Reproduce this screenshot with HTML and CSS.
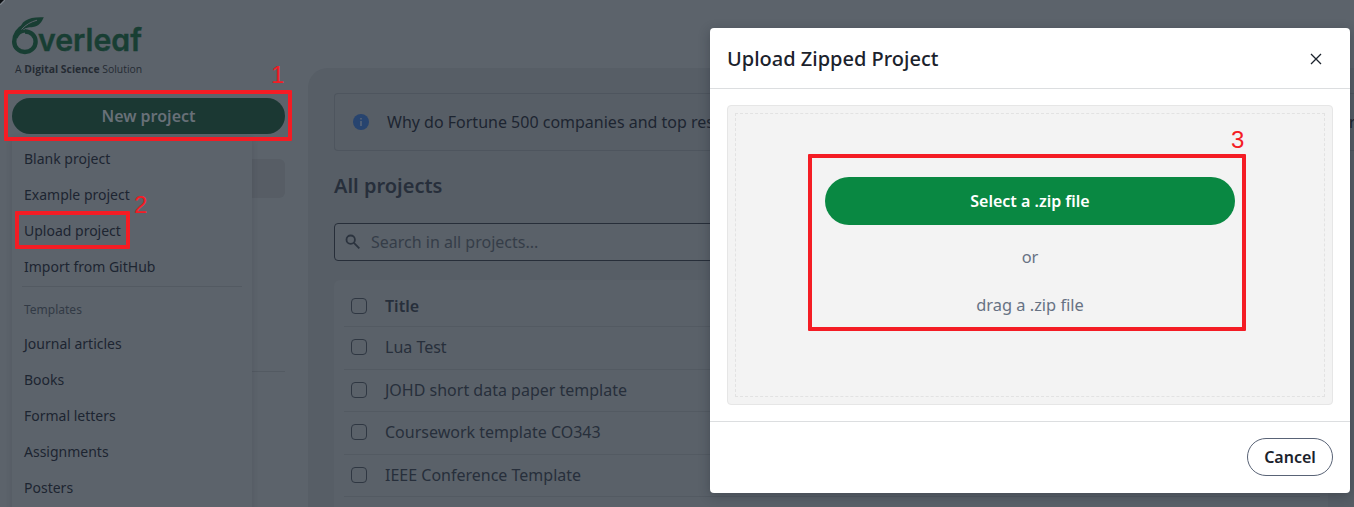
FILE: index.html
```html
<!DOCTYPE html>
<html lang="en">
<head>
<meta charset="utf-8">
<title>Overleaf</title>
<link rel="stylesheet" href="styles.css">
</head>
<body>
<div class="app">
  <aside class="sidebar">
    <div class="brand">
      <svg class="logo" width="132" height="40" viewBox="0 0 132 40">
        <path class="logo-ring" d="M13 9.500C5 14 2.200 20 2.200 25.800a10.700 10.200 0 0 0 21.400 0c0-6-4.600-10.300-10.600-10.300"/>
        <path class="logo-curl" d="M4 22C6 17 9.500 14.800 14 15"/>
        <path class="logo-leaf" d="M8.500 14.800C7.500 5 17 .5 31.800 1.300C29.500 6 27.500 10.300 21 11.100C17 11.600 12 11.800 8.500 14.800z"/>
        <path class="logo-vein" d="M9.500 13.500C14 8.500 19 5.800 25 4.200"/>
        <text class="logo-word" x="26" y="34.500" textLength="104" lengthAdjust="spacingAndGlyphs">verleaf</text>
      </svg>
      <div class="tagline">A <b>Digital Science</b> Solution</div>
    </div>
    <button class="new-project">New project</button>
    <div class="filter-active"></div>
    <div class="filter-divider"></div>
    <nav class="menu">
      <a>Blank project</a>
      <a>Example project</a>
      <a>Upload project</a>
      <a>Import from GitHub</a>
      <div class="menu-line"></div>
      <div class="menu-heading">Templates</div>
      <a>Journal articles</a>
      <a>Books</a>
      <a>Formal letters</a>
      <a>Assignments</a>
      <a>Posters</a>
    </nav>
  </aside>
  <main class="content">
    <div class="notice">
      <svg width="16" height="16" viewBox="0 0 16 16"><circle cx="8" cy="8" r="8" fill="#27446f"/><path d="M7.200 4h1.600v1.600H7.200zM7.200 7h1.600v5H7.200z" fill="#586477"/></svg>
      <span class="notice-text">Why do Fortune 500 companies and top res</span>
      <span class="notice-end">r</span>
    </div>
    <h1>All projects</h1>
    <div class="search">
      <svg width="16" height="16" viewBox="0 0 16 16" fill="none" stroke="#2b333e" stroke-width="1.800"><circle cx="5.700" cy="5.700" r="4.200"/><path d="M8.900 8.900L14.300 14.300"/></svg>
      <span>Search in all projects...</span>
    </div>
    <div class="table">
      <div class="row head"><i class="box"></i>Title</div>
      <div class="row"><i class="box"></i>Lua Test</div>
      <div class="row"><i class="box"></i>JOHD short data paper template</div>
      <div class="row"><i class="box"></i>Coursework template CO343</div>
      <div class="row"><i class="box"></i>IEEE Conference Template</div>
    </div>
  </main>
</div>
<div class="corner"></div>

<section class="modal">
  <header class="modal-head">
    <h2>Upload Zipped Project</h2>
    <svg width="12" height="12" viewBox="0 0 12 12" fill="none" stroke="#1b222c" stroke-width="1.300"><path d="M1 1L11 11M11 1L1 11"/></svg>
  </header>
  <div class="modal-body">
    <div class="drop">
      <div class="drop-inner">
        <button class="select">Select a .zip file</button>
        <p>or</p>
        <p>drag a .zip file</p>
      </div>
    </div>
  </div>
  <footer class="modal-foot"><button class="cancel">Cancel</button></footer>
</section>

<div class="mark mark-new"></div><span class="num num-new">1</span>
<div class="mark mark-upload"></div><span class="num num-upload">2</span>
<div class="mark mark-zip"></div><span class="num num-zip">3</span>
</body>
</html>
```
FILE: styles.css
```css
* { box-sizing: border-box; }
body {
  margin: 0;
  width: 1354px;
  height: 507px;
  overflow: hidden;
  position: relative;
  background: #5c636b;
  font-family: "Noto Sans", sans-serif;
  font-size: 16px;
  color: #1d2531;
}
button { font-family: inherit; border: 0; padding: 0; }

.app { display: flex; height: 507px; }
.sidebar { width: 308px; padding: 16px 23px 0 12px; position: relative; flex: none; }
.brand { height: 82px; }
.logo { display: block; overflow: visible; }
.logo-ring { fill: none; stroke: #183e33; stroke-width: 4.400; }
.logo-curl { fill: none; stroke: #183e33; stroke-width: 3; }
.logo-leaf { fill: #183e33; }
.logo-vein { fill: none; stroke: #5c636b; stroke-width: 1; }
.logo-word {
  font-family: Inter, sans-serif;
  font-size: 31px;
  font-weight: 600;
  font-feature-settings: "cv11";
  fill: #183e33;
  stroke: #183e33;
  stroke-width: .4;
}
.tagline {
  font-family: "Open Sans", sans-serif;
  font-size: 10.400px;
  line-height: 14px;
  margin: 6px 0 0 3px;
  white-space: nowrap;
  color: #252b33;
}
.new-project {
  display: block;
  width: 273px;
  height: 36px;
  border-radius: 18px;
  background: #1b3833;
  color: #687078;
  font-size: 16px;
  font-weight: 600;
}
.filter-active { margin-top: 25px; height: 39px; border-radius: 6px; background: #575d65; }
.filter-divider { margin-top: 173px; height: 1px; background: #535a62; }
.menu {
  position: absolute;
  left: 12px;
  top: 137px;
  width: 240px;
  height: 380px;
  padding: 4px;
  border-radius: 4px;
  background: #5c636b;
  box-shadow: 0 2px 6px rgba(30, 38, 48, .16);
  font-size: 14px;
}
.menu a { display: block; height: 36px; line-height: 36px; padding-left: 8px; }
.menu-line { height: 1px; margin: 1px 6px 5px; background: #535a62; }
.menu-heading { height: 34px; line-height: 35px; padding-left: 8px; font-size: 12px; color: #323a45; }

.content {
  flex: 1;
  min-width: 0;
  margin-top: 68px;
  padding: 25px 0 0 26px;
  border-radius: 20px 0 0 0;
  background: #575e66;
  color: #272f3b;
}
.notice {
  display: flex;
  align-items: center;
  height: 58px;
  padding-left: 18px;
  border: 1px solid #4e555e;
  border-right: 0;
  border-radius: 4px 0 0 4px;
  color: #1d2531;
}
.notice-text { margin-left: 18px; flex: 1; white-space: nowrap; }
.notice-end { width: 5px; }
h1 { margin: 21px 0 0; font-size: 20px; line-height: 28px; font-weight: 600; }
.search {
  display: flex;
  align-items: center;
  gap: 10px;
  margin: 23px 26px 0 0;
  height: 38px;
  padding-left: 10px;
  border: 1px solid #272e39;
  border-radius: 4px;
  background: #5a6169;
  color: #353d48;
}
.table { margin: 19px 26px 0 0; padding: 6px 8px 0 10px; height: 240px; border-radius: 6px; background: #5a6169; }
.row {
  display: flex;
  align-items: center;
  gap: 18px;
  height: 42.600px;
  padding: 0 0 1.600px 7px;
  border-bottom: 1px solid #535a62;
}
.head { height: 41px; padding-bottom: 0; font-weight: 600; }
.box { width: 16px; height: 16px; border: 1px solid #2f3742; border-radius: 4px; }

.corner {
  position: absolute;
  left: 0;
  top: 0;
  width: 5px;
  height: 5px;
  background: linear-gradient(135deg, #0b0e12 35%, #858c94 45%, #5c636b 65%);
}

.modal {
  position: absolute;
  left: 710px;
  top: 28px;
  width: 640px;
  height: 465px;
  display: flex;
  flex-direction: column;
  border-radius: 4px;
  background: #fff;
  box-shadow: 0 3px 12px rgba(20, 26, 35, .3);
  color: #1b222c;
}
.modal-head {
  display: flex;
  align-items: center;
  justify-content: space-between;
  height: 61px;
  padding: 2px 28px 0 17px;
  border-bottom: 1px solid #dcdee0;
}
h2 { margin: 0; font-size: 20px; line-height: 28px; font-weight: 500; }
.modal-body { padding: 16px 17px; height: 332px; }
.drop { height: 300px; padding: 7px; border: 1px solid #e6e6e6; border-radius: 4px; background: #f3f3f3; }
.drop-inner {
  display: flex;
  flex-direction: column;
  align-items: center;
  height: 284px;
  padding-top: 63px;
  border: 1px dashed #e2e2e2;
}
.select {
  width: 410px;
  height: 48px;
  border-radius: 24px;
  background: #098842;
  color: #fff;
  font-size: 16px;
  font-weight: 600;
}
.drop p { margin: 20px 0 4px; font-size: 16.400px; line-height: 24px; color: #677283; }
.modal-foot {
  display: flex;
  flex: 1;
  justify-content: flex-end;
  padding: 16px 17px 0;
  border-top: 1px solid #dcdee0;
}
.cancel {
  width: 86px;
  height: 38px;
  border: 1px solid #596376;
  border-radius: 19px;
  background: #fff;
  color: #1b222c;
  font-size: 16px;
  font-weight: 600;
}

/* numbered step annotations */
.mark { position: absolute; border: 4px solid #f41c24; border-radius: 1px; }
.mark-new { left: 4px; top: 90px; width: 288px; height: 51px; }
.mark-upload { left: 15px; top: 211px; width: 115px; height: 38px; }
.mark-zip { left: 808px; top: 154px; width: 438px; height: 177px; }
.num {
  position: absolute;
  color: #f41c24;
  font-family: "Liberation Sans", Arial, sans-serif;
  font-size: 24px;
  line-height: 24px;
}
.num-new { left: 271px; top: 63px; }
.num-upload { left: 134px; top: 193px; }
.num-zip { left: 1231px; top: 128px; }
```
